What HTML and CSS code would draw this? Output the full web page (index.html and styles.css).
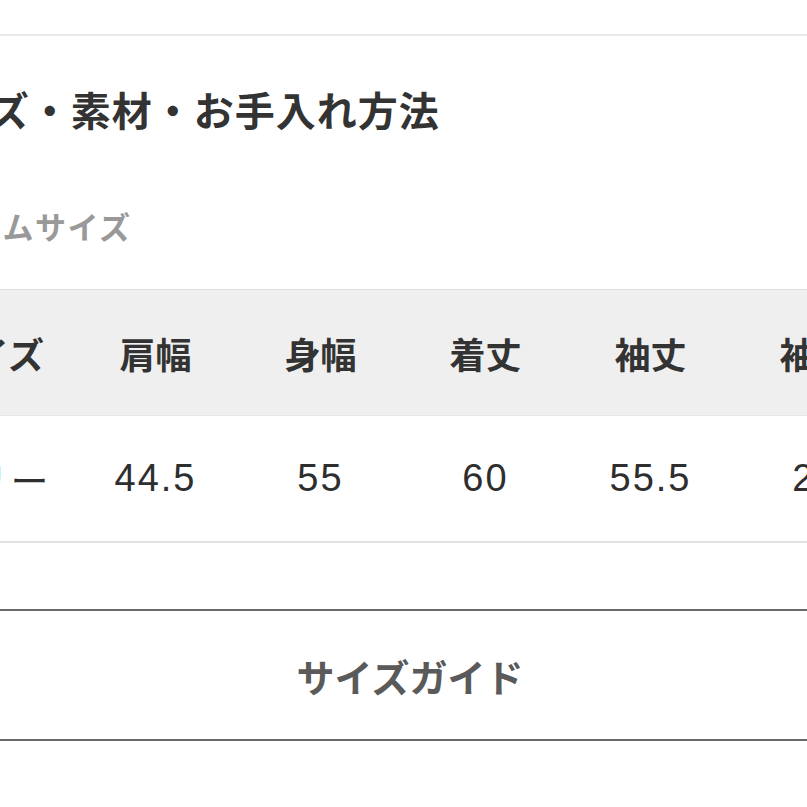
FILE: index.html
```html
<!DOCTYPE html>
<html lang="ja">
<head>
<meta charset="utf-8">
<title>サイズ・素材・お手入れ方法</title>
<link rel="stylesheet" href="styles.css">
</head>
<body>
<div class="page">
  <section class="section">
    <h2 class="title">サイズ・素材・お手入れ方法</h2>
    <h3 class="subtitle">アイテムサイズ</h3>
    <table class="size-table">
      <thead>
        <tr>
          <th>サイズ</th>
          <th>肩幅</th>
          <th>身幅</th>
          <th>着丈</th>
          <th>袖丈</th>
          <th>袖口</th>
        </tr>
      </thead>
      <tbody>
        <tr>
          <td>フリー</td>
          <td>44.5</td>
          <td>55</td>
          <td>60</td>
          <td>55.5</td>
          <td>24</td>
        </tr>
      </tbody>
    </table>
    <a class="guide-button" href="#">サイズガイド</a>
  </section>
</div>
</body>
</html>
```
FILE: styles.css
```css
html, body {
  margin: 0;
  padding: 0;
  overflow: hidden;
  background: #ffffff;
}

body {
  font-family: "Noto Sans CJK JP", "Noto Sans", sans-serif;
  color: #333333;
}

.page {
  margin-left: -92px;
  width: 1004px;
}

.section {
  margin-top: 34px;
  border-top: 2px solid #e8e8e8;
}

.title {
  margin: 49px 0 0 0;
  font-size: 40px;
  line-height: 48px;
  font-weight: 700;
  letter-spacing: 1px;
  color: #333333;
}

.subtitle {
  margin: 73px 0 0 0;
  font-size: 31px;
  line-height: 40px;
  font-weight: 700;
  letter-spacing: 1.5px;
  color: #999999;
}

.size-table {
  margin-top: 43px;
  border-collapse: collapse;
  table-layout: fixed;
  width: 990px;
}

.size-table th,
.size-table td {
  width: 165px;
  padding: 0;
  text-align: center;
  white-space: nowrap;
}

.size-table th {
  height: 125px;
  background: #efefef;
  border-top: 1px solid #dedede;
  border-bottom: 1px solid #e6e6e6;
  font-size: 36px;
  font-weight: 700;
  color: #333333;
}

.size-table td {
  height: 125px;
  border-bottom: 2px solid #e2e2e2;
  font-family: "Liberation Sans", "Noto Sans CJK JP", sans-serif;
  font-size: 38px;
  letter-spacing: 2px;
  color: #2e2e2e;
}

.guide-button {
  display: flex;
  align-items: center;
  justify-content: center;
  margin-top: 66px;
  height: 128px;
  border-top: 2px solid #6a6a6a;
  border-bottom: 2px solid #6a6a6a;
  font-size: 38px;
  font-weight: 700;
  color: #5a5a5a;
  text-decoration: none;
}
```
